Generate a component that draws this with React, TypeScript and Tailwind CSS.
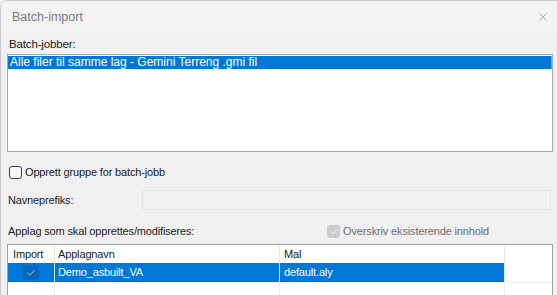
import { Check, X } from "lucide-react";

const font = { fontFamily: '"Liberation Sans", Arial, sans-serif' };

export default function App() {
  return (
    <div
      className="w-[557px] h-[295px] overflow-hidden bg-[#f0f0f0] text-[11px] tracking-[-0.15px] text-[#1a1a1a] border-l border-t border-[#c9c9c9] rounded-tl-[7px]"
      style={font}
    >
      {/* title bar */}
      <div className="h-[32px] flex items-center justify-between pl-[11px] pr-[7px] bg-[#f3f3f3]">
        <span className="text-[12.5px] tracking-normal text-[#7a7a7a]">Batch-import</span>
        <X className="w-[14px] h-[14px] text-[#808080]" strokeWidth={1} />
      </div>

      <div className="px-[6px]">
        <div className="mt-[4px] h-[14px] leading-[14px] pl-[2px] text-[11.5px]">Batch-jobber:</div>

        {/* job list */}
        <div className="mt-[3px] h-[98px] w-[546px] border border-[#a9a9b1] bg-white pt-px">
          <div className="h-[13px] leading-[13px] bg-[#0078d7] text-white pl-[2px] border-r border-[#5aa7e6] text-[12px] tracking-normal">
            Alle filer til samme lag - Gemini Terreng .gmi fil
          </div>
        </div>

        {/* group checkbox */}
        <label className="mt-[14px] h-[13px] flex items-center gap-[3px] pl-[2px]">
          <span className="w-[13px] h-[13px] rounded-[3px] border border-[#3c3c3c] bg-[#f6f6f6]" />
          <span>Opprett gruppe for batch-jobb</span>
        </label>

        {/* name prefix */}
        <div className="mt-[11px] h-[20px] flex items-center">
          <span className="w-[135px] pl-px">Navneprefiks:</span>
          <div className="w-[410px] h-[20px] border border-[#e4e4e4] bg-[#f1f1f1]" />
        </div>

        {/* applag header row */}
        <div className="mt-[15px] h-[13px] flex items-center justify-between pr-[62px] pl-px">
          <span>Applag som skal opprettes/modifiseres:</span>
          <span className="flex items-center gap-[3px] text-[#6d6d6d]">
            <span className="w-[13px] h-[13px] rounded-[3px] bg-[#cccccc] flex items-center justify-center">
              <Check className="w-[10px] h-[10px] text-white" strokeWidth={2} />
            </span>
            Overskriv eksisterende innhold
          </span>
        </div>

        {/* table */}
        <div className="mt-[6px] w-[546px] h-[60px] border border-[#a0a0a0] bg-white">
          <div className="grid grid-cols-[47px_225px_225px_1fr] h-[18px] leading-[18px]">
            <div className="border-r border-[#e5e5e5] pl-[5px]">Import</div>
            <div className="border-r border-[#e5e5e5] pl-[3px]">Applagnavn</div>
            <div className="border-r border-[#e5e5e5] pl-[4px]">Mal</div>
            <div />
          </div>
          <div className="grid grid-cols-[47px_225px_225px_1fr] h-[20px] leading-[19px] border-b border-[#ececec]">
            <div className="bg-[#0078d7] border-r border-[#d0e4f5] flex items-center justify-center">
              <span className="w-[16px] h-[15px] rounded-[3px] bg-[#0067c0] flex items-center justify-center">
                <Check className="w-[10px] h-[10px] text-white" strokeWidth={1.5} />
              </span>
            </div>
            <div className="bg-[#0078d7] text-white border-r border-[#d0e4f5] pl-[3px]">Demo_asbuilt_VA</div>
            <div className="bg-[#0078d7] text-white border-r border-[#e5e5e5] pl-[4px]">default.aly</div>
            <div />
          </div>
          <div className="grid grid-cols-[47px_225px_225px_1fr] h-[20px]">
            <div className="border-r border-[#ececec]" />
            <div className="border-r border-[#ececec]" />
            <div className="border-r border-[#ececec]" />
            <div />
          </div>
        </div>
      </div>
    </div>
  );
}
